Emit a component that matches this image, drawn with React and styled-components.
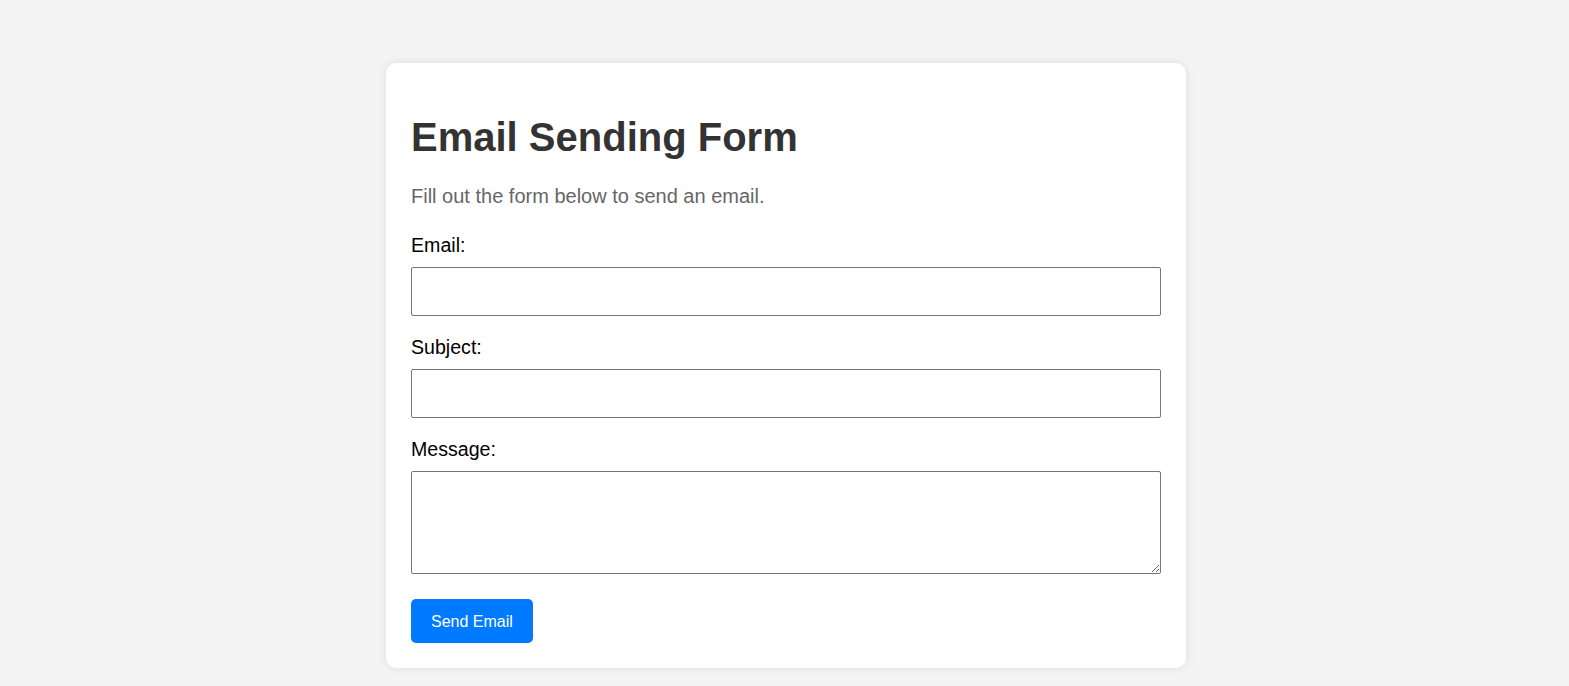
import React from 'react'
import styled, { createGlobalStyle } from 'styled-components'

const GlobalStyle = createGlobalStyle`
  html, body {
    margin: 0;
    padding: 0;
    background-color: #f4f4f4;
    font-family: "Liberation Sans", Arial, sans-serif;
  }
`;

const Page = styled.div`
  display: flex;
  justify-content: center;
  padding: 63px 0 17px 3px;
  min-height: 686px;
  box-sizing: border-box;
`;

const Card = styled.div`
  width: 800px;
  box-sizing: border-box;
  padding: 25px;
  background-color: #fff;
  border-radius: 10px;
  box-shadow: 0 0 10px rgba(0, 0, 0, 0.1);
  align-self: flex-start;
`;

const Title = styled.h1`
  margin: 26px 0 0;
  font-size: 40px;
  line-height: 46px;
  font-weight: 700;
  color: #333;
`;

const Intro = styled.p`
  margin: 25px 0 0;
  font-size: 20px;
  line-height: 23px;
  color: #666;
`;

const Form = styled.form`
  display: flex;
  flex-direction: column;
  margin-top: 26px;
`;

const Field = styled.div`
  display: flex;
  flex-direction: column;
  gap: 11px;
  margin-bottom: ${(p) => (p.$last ? '25px' : '20px')};
`;

const Label = styled.label`
  font-size: 19.6px;
  line-height: 22px;
  color: #000;
`;

const Input = styled.input`
  width: 100%;
  height: 49px;
  box-sizing: border-box;
  border: 1px solid #767676;
  border-radius: 2px;
  padding: 0 10px;
  font-family: inherit;
  font-size: 16px;
  background: #fff;
`;

const TextArea = styled.textarea`
  display: block;
  width: 100%;
  height: 103px;
  box-sizing: border-box;
  border: 1px solid #767676;
  border-radius: 2px;
  padding: 10px;
  font-family: inherit;
  font-size: 16px;
  resize: vertical;
  background: #fff;
`;

const Button = styled.button`
  align-self: flex-start;
  height: 44px;
  padding: 1px 20px 0;
  border: none;
  border-radius: 5px;
  background-color: #007bff;
  color: #fff;
  font-family: inherit;
  font-size: 16px;
  cursor: pointer;
`;

export default function App() {
  return (
    <>
      <GlobalStyle />
      <Page>
        <Card>
          <Title>Email Sending Form</Title>
          <Intro>Fill out the form below to send an email.</Intro>
          <Form onSubmit={(e) => e.preventDefault()}>
            <Field>
              <Label htmlFor="email">Email:</Label>
              <Input id="email" type="email" />
            </Field>
            <Field>
              <Label htmlFor="subject">Subject:</Label>
              <Input id="subject" type="text" />
            </Field>
            <Field $last>
              <Label htmlFor="message">Message:</Label>
              <TextArea id="message" />
            </Field>
            <Button type="submit">Send Email</Button>
          </Form>
        </Card>
      </Page>
    </>
  )
}
